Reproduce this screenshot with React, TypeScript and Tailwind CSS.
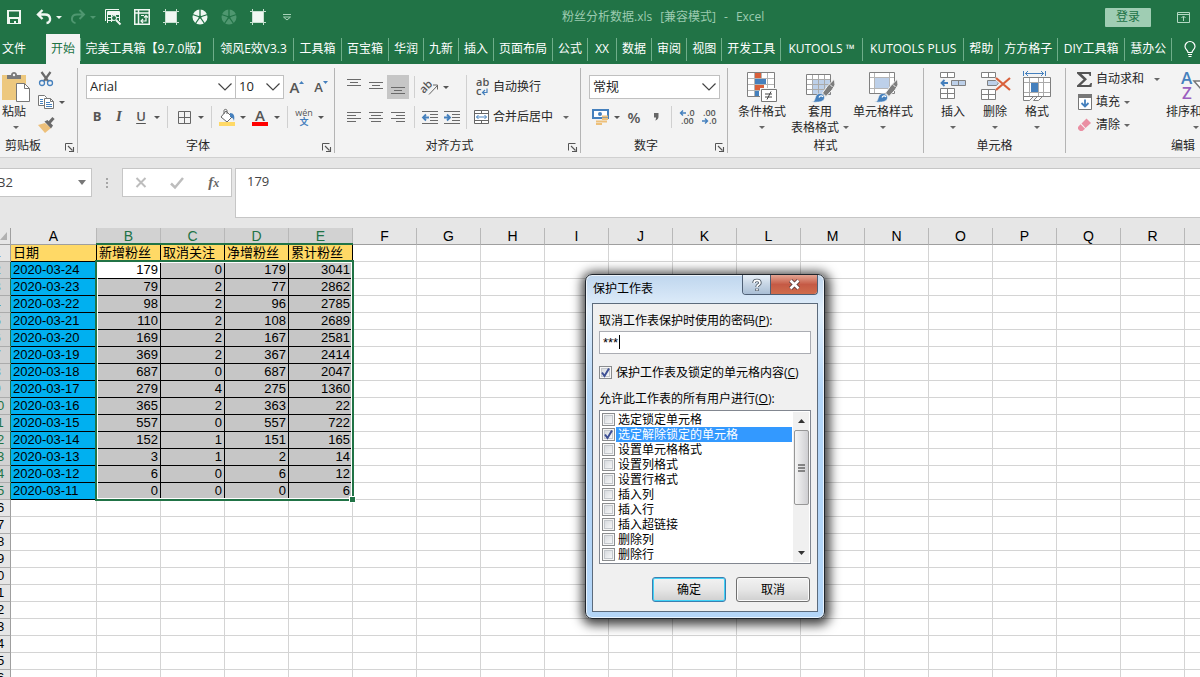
import { useState } from "react";
import type { ReactNode } from "react";

const columns = "ABCDEFGHIJKLMNOPQRS".split("");
const headings = ["日期", "新增粉丝", "取消关注", "净增粉丝", "累计粉丝"];
const records: (string | number)[][] = [
  ["2020-03-24", 179, 0, 179, 3041],
  ["2020-03-23", 79, 2, 77, 2862],
  ["2020-03-22", 98, 2, 96, 2785],
  ["2020-03-21", 110, 2, 108, 2689],
  ["2020-03-20", 169, 2, 167, 2581],
  ["2020-03-19", 369, 2, 367, 2414],
  ["2020-03-18", 687, 0, 687, 2047],
  ["2020-03-17", 279, 4, 275, 1360],
  ["2020-03-16", 365, 2, 363, 22],
  ["2020-03-15", 557, 0, 557, 722],
  ["2020-03-14", 152, 1, 151, 165],
  ["2020-03-13", 3, 1, 2, 14],
  ["2020-03-12", 6, 0, 6, 12],
  ["2020-03-11", 0, 0, 0, 6],
];
const rowCount = 26;

const tabs: { name: string; width?: string }[] = [
  { name: "完美工具箱【9.7.0版】", width: "w-[133px]" },
  { name: "领风E效V3.3", width: "w-[80px]" },
  { name: "工具箱", width: "w-12" },
  { name: "百宝箱" },
  { name: "华润" },
  { name: "九新" },
  { name: "插入" },
  { name: "页面布局" },
  { name: "公式" },
  { name: "XX", width: "w-[29px]" },
  { name: "数据" },
  { name: "审阅" },
  { name: "视图" },
  { name: "开发工具" },
  { name: "KUTOOLS ™", width: "w-[82px]" },
  { name: "KUTOOLS PLUS", width: "w-[101px]" },
  { name: "帮助" },
  { name: "方方格子" },
  { name: "DIY工具箱", width: "w-[67px]" },
  { name: "慧办公" },
];

const permissions = [
  "选定锁定单元格",
  "选定解除锁定的单元格",
  "设置单元格格式",
  "设置列格式",
  "设置行格式",
  "插入列",
  "插入行",
  "插入超链接",
  "删除列",
  "删除行",
];

function Icon({ w = 16, h = 16, children, className = "" }: { w?: number; h?: number; children: ReactNode; className?: string }) {
  return (
    <svg width={w} height={h} viewBox={`0 0 ${w} ${h}`} fill="none" className={`shrink-0 overflow-visible ${className}`} aria-hidden="true">
      {children}
    </svg>
  );
}

function Caret({ className = "" }: { className?: string }) {
  return (
    <Icon w={6} h={3} className={className}>
      <path d="M0 0h6L3 3z" fill="currentColor" />
    </Icon>
  );
}

function Tool({ label, width = "w-[22px]", active = false, children }: { label: string; width?: string; active?: boolean; children: ReactNode }) {
  return (
    <button type="button" aria-label={label} className={`flex h-6 shrink-0 items-center justify-center text-[#555] ${width} ${active ? "bg-[#c6c6c6]" : ""}`}>
      {children}
    </button>
  );
}

function Drop({ label }: { label: string }) {
  return (
    <Tool label={label} width="w-[10px]">
      <Caret />
    </Tool>
  );
}

function Rule() {
  return <span className="ml-[5px] mr-1 h-[22px] w-px shrink-0 bg-[#d0d0d0]" />;
}

function Group({ label, width, launcher = false, labelClass = "", children }: { label: string; width: string; launcher?: boolean; labelClass?: string; children: ReactNode }) {
  return (
    <section aria-label={label} className={`my-1 flex h-[85px] shrink-0 flex-col border-r border-[#b4b4b4] ${width}`}>
      <div className="h-[70px]">{children}</div>
      <div className="flex h-[15px] items-center pt-px">
        <span className={`flex-1 text-center leading-[14px] ${labelClass}`}>{label}</span>
        {launcher && (
          <button type="button" aria-label={`${label}设置`} className="flex w-4 justify-center pt-[3px] text-[#555]">
            <Icon w={9} h={9}>
              <path d="M.5 7.500V.5H7.500" stroke="currentColor" />
              <path d="M3 3l4.500 4.500M8.500 4v4.500H4" stroke="currentColor" strokeWidth="1.100" />
            </Icon>
          </button>
        )}
      </div>
    </section>
  );
}

function Combo({ label, value, width }: { label: string; value: string; width: string }) {
  return (
    <div className={`grid h-6 items-center border border-[#c0c0c0] bg-white ${width}`}>
      <select aria-label={label} defaultValue={value} className="h-full w-full appearance-none bg-transparent pl-[3px] text-[13px] outline-none [grid-area:1/1]">
        <option>{value}</option>
      </select>
      <Icon w={14} h={8} className="pointer-events-none mr-[3px] justify-self-end [grid-area:1/1]">
        <path d="M.5.5L7 7L13.500.5" stroke="#444" strokeWidth="1.200" />
      </Icon>
    </div>
  );
}

function Lines({ widths, top, align }: { widths: number[]; top: number; align: "l" | "c" | "r" }) {
  return (
    <Icon w={14} h={14}>
      {widths.map((w, i) => (
        <path key={i} d={`M${align === "l" ? 0 : align === "c" ? (14 - w) / 2 : 14 - w} ${top + i * 3 + 0.5}h${w}`} stroke="#6a6a6a" />
      ))}
    </Icon>
  );
}

function BigTool({ label, width, icon }: { label: string; width: string; icon: ReactNode }) {
  return (
    <button type="button" className={`flex shrink-0 flex-col items-center pt-1 ${width}`}>
      <span className="flex h-8 items-start">{icon}</span>
      <span className="whitespace-nowrap leading-4">{label}</span>
      <Caret className="mt-[6px] text-[#666]" />
    </button>
  );
}

function BrushOverlay() {
  return (
    <>
      <path d="M29.500 7l-7 7-5 7 3.500 3.500 6-6.500 3-5z" fill="#7d7d7d" stroke="#f3f3f3" />
      <path d="M25 12.500l2.500 2.500" stroke="#f3f3f3" />
      <path d="M6 30c5 0 3-4 6-7.500 3-2.500 8 0 7.500 3.500-.5 4-6 4.500-13.500 4z" fill="#4580bd" stroke="#f3f3f3" strokeWidth=".6" />
      <path d="M14 25.500c1-2 3-2 4-.5" stroke="#fff" strokeWidth="1.200" />
    </>
  );
}

function PasteIcon() {
  return (
    <Icon w={29} h={31}>
      <path d="M0 3h24v25H0z" fill="#edc87e" />
      <path d="M5 3h4c0-4 6-4 6 0h4v4H5z" fill="#7a7a7a" />
      <circle cx="12" cy="3" r="1.200" fill="#f3f3f3" />
      <path d="M14.500 11.500h8l5 5v13h-13z" fill="#fff" stroke="#777" />
      <path d="M22.500 11.500v5h5" stroke="#777" />
    </Icon>
  );
}

function CutIcon() {
  return (
    <Icon>
      <path d="M3.500 1l6.500 9M12.500 1L6 10" stroke="#6a6a6a" strokeWidth="2.200" />
      <circle cx="4" cy="12" r="2.500" stroke="#4580bd" strokeWidth="1.300" />
      <circle cx="12" cy="12" r="2.500" stroke="#4580bd" strokeWidth="1.300" />
    </Icon>
  );
}

function CopyIcon() {
  return (
    <Icon>
      <path d="M.5 1.500h6l2 2v8h-8z" fill="#fff" stroke="#777" />
      <path d="M2 5.500h3M2 7.500h3M2 9.500h3" stroke="#4580bd" />
      <path d="M6.500 4.500h6l3 3v7h-9z" fill="#fff" stroke="#777" />
      <path d="M12.500 4.500v3h3" stroke="#777" />
      <path d="M8 8.500h4M8 10.500h6M8 12.500h6" stroke="#4580bd" />
    </Icon>
  );
}

function PainterIcon() {
  return (
    <Icon>
      <path d="M0 8l7-2 6 5-6 5z" fill="#edc07a" />
      <path d="M6.500 4.500l3-1.500 5.500 5.500-2 3z" fill="#6a6a6a" />
      <path d="M11 6l4.500-5" stroke="#6a6a6a" strokeWidth="3" />
    </Icon>
  );
}

function ConditionalIcon() {
  return (
    <Icon w={30} h={31}>
      <path d="M.5.500h27v24H.5z" fill="#fff" />
      <path d="M8 1h6v5H8zM8 13h9v5H8z" fill="#d9603b" />
      <path d="M8 7h11v5H8zM8 19h4v5H8z" fill="#4580bd" />
      <path d="M7.500 1v23M14.500 1v5M20.500 1v23M1 6.500h26M1 12.500h26M1 18.500h26" stroke="#b5b5b5" />
      <path d="M.5.500h27v24H.5z" stroke="#808080" />
      <path d="M13 16h18v15H13z" fill="#f3f3f3" />
      <path d="M14.500 17.500h15v12h-15z" fill="#fff" stroke="#777" />
      <path d="M18 22h7M18 25h7M24 19.500l-4 8" stroke="#444" />
    </Icon>
  );
}

function TableFormatIcon() {
  return (
    <Icon w={31} h={32}>
      <path d="M1.500 2.500h24v20h-24z" fill="#fff" />
      <path d="M8 8h18v15H8z" fill="#bdd0e9" />
      <path d="M7.500 2.500v20M13.500 2.500v20M19.500 2.500v20M1.500 7.500h24M1.500 12.500h24M1.500 17.500h24" stroke="#aaa" />
      <path d="M1.500 2.500h24v20h-24z" stroke="#808080" />
      <BrushOverlay />
    </Icon>
  );
}

function CellStyleIcon() {
  return (
    <Icon w={31} h={32}>
      <path d="M1.500.500h25v21h-25z" fill="#fff" stroke="#808080" />
      <path d="M6.500 1v20M21.500 1v20M2 5.500h24M2 16.500h24" stroke="#b5b5b5" />
      <path d="M7 6h14v10H7z" fill="#bdd0e9" />
      <BrushOverlay />
    </Icon>
  );
}

function InsertIcon() {
  return (
    <Icon w={27} h={28}>
      <path d="M.5.500h14v5H.5zM7.500.5v5M.5 16.500h14v10H.5zM7.500 16.500v10M.5 21.500h14" fill="#fff" stroke="#808080" />
      <path d="M11.500 8.500h14v5h-14zM18.500 8.500v5" fill="#bdd0e9" stroke="#808080" />
      <path d="M8 11H2M4.500 8L1.500 11l3 3" stroke="#4580bd" strokeWidth="1.800" />
    </Icon>
  );
}

function DeleteIcon() {
  return (
    <Icon w={28} h={28}>
      <path d="M.5.500h14v5H.5zM7.500.5v5M.5 17.500h14v10H.5zM7.500 17.500v10M.5 22.500h14" fill="#fff" stroke="#808080" />
      <path d="M6.500 8.500h9l2 2.500-2 2.500h-9z" fill="#bdd0e9" stroke="#808080" />
      <path d="M15 6l14 12M29 6L15 18" stroke="#f3f3f3" strokeWidth="4" />
      <path d="M15 6l14 12M29 6L15 18" stroke="#d9603b" strokeWidth="2.200" />
    </Icon>
  );
}

function FormatIcon() {
  return (
    <Icon w={28} h={31}>
      <path d="M.5-1v5M22.500-1v5M2 1.500h19M5-1L2.500 1.500 5 4M18-1l2.500 2.500L18 4" stroke="#4580bd" />
      <path d="M.5 5.500h27v19h-8l-4 4h-5l4-4h-4l-4 4h-6z" fill="#fff" stroke="#808080" />
      <path d="M6.500 6v18M15.500 6v18M20.500 6v18M1 10.500h26M1 20.500h26" stroke="#aaa" />
      <path d="M.5 24.500h27M6.500 28.500l4-4" stroke="#808080" />
      <path d="M8 11h7v9H8z" fill="#4580bd" />
    </Icon>
  );
}

function QuickAccess() {
  const corners = (
    <Icon>
      <path d="M3 3h10v10H3z" fill="#f0f7f2" />
      <path d="M2.500 0v3M0 2.500h3M13.500 0v3M13 2.500h3M2.500 13v3M0 13.500h3M13.500 13v3M13 13.500h3M2.500 3v10M13.500 3v10M3 2.500h10M3 13.500h10" stroke="#c8e0d1" />
    </Icon>
  );
  const aperture = (
    <Icon>
      <circle cx="8" cy="8" r="7.500" fill="currentColor" />
      <path d="M8 8V0M8 8L.5 5.500M8 8l7.500-2.500M8 8l-4.500 6.500M8 8l4.500 6.500" stroke="#217346" strokeWidth="1.300" />
      <circle cx="8" cy="8" r="1.500" fill="#217346" />
    </Icon>
  );
  const item = "flex h-6 shrink-0 items-center justify-center text-[#f0f7f2]";
  return (
    <div className="flex w-[562px] shrink-0 items-center">
      <button type="button" aria-label="保存" className={`${item} w-7`}>
        <Icon w={14} h={14}>
          <path d="M0 0h14v14H0zM2 1.500v5.500h10V1.500zM3 9v4h4v-2h2v2h2V9z" fill="currentColor" fillRule="evenodd" />
        </Icon>
      </button>
      <button type="button" aria-label="撤销" className={`${item} w-[37px] gap-1 pl-1`}>
        <Icon>
          <path d="M2 5.500h7c6.500 0 6.500 8 1.500 8.500M6.500 1L2 5.500 6.500 10" stroke="currentColor" strokeWidth="2.400" />
        </Icon>
        <Caret />
      </button>
      <button type="button" aria-label="重做" className={`${item} w-[35px] gap-1 !text-[#4f9770]`}>
        <Icon>
          <path d="M14 5.500H7c-6.500 0-6.500 8-1.500 8.500M9.500 1L14 5.500 9.500 10" stroke="currentColor" strokeWidth="2" />
        </Icon>
        <Caret />
      </button>
      <button type="button" aria-label="查看表格" className={`${item} w-[26px]`}>
        <Icon>
          <path d="M.5 12V.5H14M2.500 14V2.500h12V12M2.500 5.500h12M2.500 8.500h12M6.500 5v8M10.500 5v6M2.500 11.500h6" stroke="currentColor" />
          <path d="M3 3h11v2H3z" fill="currentColor" />
          <circle cx="9" cy="9" r="2.500" fill="#217346" stroke="currentColor" />
          <path d="M11 11l4.500 4.500" stroke="currentColor" strokeWidth="2" />
        </Icon>
      </button>
      <button type="button" aria-label="数据透视表" className={`${item} w-8`}>
        <Icon>
          <path d="M.75.75h14.500v14.500H.75zM1 4h14M4.500 1v14" stroke="currentColor" strokeWidth="1.500" />
          <path d="M7 12h5V7M9 10l-2 2 2 2M10 8.500l2-2 2 2M7 6.500h3" stroke="currentColor" strokeWidth="1.200" />
        </Icon>
      </button>
      <button type="button" aria-label="选择区域" className={`${item} w-[26px]`}>{corners}</button>
      <button type="button" aria-label="宏" className={`${item} w-8`}>{aperture}</button>
      <button type="button" aria-label="停用宏" className={`${item} w-[26px] !text-[#4f9770]`}>{aperture}</button>
      <button type="button" aria-label="调整区域" className={`${item} w-8`}>{corners}</button>
      <button type="button" aria-label="自定义快速访问工具栏" className={`${item} w-[26px]`}>
        <Icon w={8} h={7}>
          <path d="M0 .5h8M.5 3L4 6l3.500-3z" stroke="#a9d3ba" />
        </Icon>
      </button>
    </div>
  );
}

function Ribbon() {
  return (
    <div className="flex h-[94px] shrink-0 overflow-hidden border-b border-[#d0d0d0] bg-[#f3f3f3] text-[#262626]">
      <Group label="剪贴板" width="w-[78px]" launcher labelClass="pr-[15px]">
        <div className="flex">
          <button type="button" className="flex w-9 flex-col items-start pl-[2px] pt-1">
            <PasteIcon />
            <span className="pt-px leading-4">粘贴</span>
            <Caret className="ml-[11px] mt-[6px] text-[#666]" />
          </button>
          <div className="flex flex-col pl-[2px]">
            <button type="button" aria-label="剪切" className="flex h-[22px] items-center"><CutIcon /></button>
            <button type="button" aria-label="复制" className="flex h-6 items-center gap-[5px] text-[#555]"><CopyIcon /><Caret /></button>
            <button type="button" aria-label="格式刷" className="flex h-[22px] items-center"><PainterIcon /></button>
          </div>
        </div>
      </Group>

      <Group label="字体" width="w-[257px]" launcher>
        <div className="flex flex-col gap-[6px] pl-2 pt-[7px]">
          <div className="flex">
            <Combo label="字体名称" value="Arial" width="w-[150px]" />
            <Combo label="字号" value="10" width="-ml-px w-[49px]" />
            <Tool label="增大字号" width="w-[26px]">
              <span className="text-[15px] font-semibold leading-none">A</span>
              <Icon w={5} h={12}><path d="M0 3h5L2.500 0z" fill="#4580bd" /></Icon>
            </Tool>
            <Tool label="减小字号" width="w-[22px]">
              <span className="text-[13px] font-semibold leading-none">A</span>
              <Icon w={5} h={12}><path d="M0 0h5L2.500 3z" fill="#4580bd" /></Icon>
            </Tool>
          </div>
          <div className="flex items-center">
            <Tool label="加粗"><span className="text-[13px] font-bold">B</span></Tool>
            <Tool label="倾斜"><span className="font-['Liberation_Serif',serif] text-[15px] font-bold italic">I</span></Tool>
            <Tool label="下划线"><span className="text-[13px] font-semibold underline underline-offset-2">U</span></Tool>
            <Drop label="下划线样式" />
            <Rule />
            <Tool label="边框" width="w-6">
              <Icon w={13} h={13}><path d="M.5.5h12v12H.5zM6.500.5v12M.5 6.500h12" stroke="#666" /></Icon>
            </Tool>
            <Drop label="边框样式" />
            <Rule />
            <Tool label="填充颜色">
              <Icon w={16} h={17}>
                <path d="M7 2l6 6-5 5-6-5z" fill="#fff" stroke="#666" />
                <path d="M5 5V1.500C5 0 8 0 8 1.500V5" stroke="#666" />
                <path d="M11 4c4 0 5 3 4 8-1-3-2-4-4-4z" fill="#4580bd" />
                <path d="M0 13h16v4H0z" fill="#ffd966" />
              </Icon>
            </Tool>
            <Drop label="填充颜色选项" />
            <Tool label="字体颜色" width="w-6">
              <span className="flex w-4 flex-col items-center border-b-4 border-[#f00] text-[15px] font-semibold leading-[13px]">A</span>
            </Tool>
            <Drop label="字体颜色选项" />
            <Rule />
            <Tool label="拼音" width="w-6">
              <span className="flex flex-col items-center">
                <span className="text-[9px] leading-[9px]">wén</span>
                <span className="text-[9px] font-bold leading-[9px] text-[#4580bd]">文</span>
              </span>
            </Tool>
            <Drop label="拼音选项" />
          </div>
        </div>
      </Group>

      <Group label="对齐方式" width="w-[246px]" launcher>
        <div className="flex pt-[7px]">
          <div className="flex flex-col gap-[6px] pl-2">
            <div className="flex items-center">
              <Tool label="顶端对齐"><Lines widths={[14, 8, 14]} top={-1} align="c" /></Tool>
              <Tool label="垂直居中"><Lines widths={[14, 8, 14]} top={2} align="c" /></Tool>
              <Tool label="底端对齐" active><Lines widths={[14, 8, 14]} top={7} align="c" /></Tool>
              <Rule />
              <Tool label="方向">
                <Icon>
                  <text x="-2" y="10" fontSize="11" fontWeight="600" fill="#555" transform="rotate(-45 6 8)">ab</text>
                  <path d="M7 15.500l8.500-9M11 6h4.500v4.500" stroke="#666" />
                </Icon>
              </Tool>
              <Drop label="方向选项" />
            </div>
            <div className="flex items-center">
              <Tool label="左对齐"><Lines widths={[14, 9, 14, 9]} top={2} align="l" /></Tool>
              <Tool label="居中"><Lines widths={[14, 10, 14, 10]} top={2} align="c" /></Tool>
              <Tool label="右对齐"><Lines widths={[14, 9, 14, 9]} top={2} align="r" /></Tool>
              <Rule />
              <Tool label="减少缩进量">
                <Icon>
                  <path d="M0 2.500h16M8 5.500h8M8 8.500h8M8 11.500h8M0 14.500h16" stroke="#6a6a6a" />
                  <path d="M7 8.500H1M4 5.500l-3 3 3 3" stroke="#4580bd" strokeWidth="1.800" />
                </Icon>
              </Tool>
              <Tool label="增加缩进量">
                <Icon>
                  <path d="M0 2.500h16M8 5.500h8M8 8.500h8M8 11.500h8M0 14.500h16" stroke="#6a6a6a" />
                  <path d="M0 8.500h6M3 5.500l3 3-3 3" stroke="#4580bd" strokeWidth="1.800" />
                </Icon>
              </Tool>
            </div>
          </div>
          <span className="ml-[3px] mr-[7px] w-px bg-[#d0d0d0]" />
          <div className="flex flex-col gap-[6px]">
            <button type="button" className="flex h-6 items-center gap-1">
              <Icon w={15} h={16}>
                <text x="2" y="7" fontSize="11" fontWeight="600" fill="#555">ab</text>
                <text x="2" y="16" fontSize="11" fontWeight="600" fill="#555">c</text>
                <path d="M13 9.500v4H9M11 11l-2.500 2.500L11 16" stroke="#4580bd" strokeWidth="1.200" />
              </Icon>
              自动换行
            </button>
            <button type="button" className="flex h-6 items-center gap-1">
              <Icon w={15} h={16}>
                <path d="M.5 1.500h14v13H.5zM.5 4.500h14M.5 11.500h14M7.500 1.500v3M7.500 11.500v3" fill="#fff" stroke="#666" />
                <path d="M2.500 8h10M4.500 6l-2 2 2 2M10.500 6l2 2-2 2" stroke="#4580bd" />
              </Icon>
              合并后居中
              <Caret className="ml-[6px] text-[#666]" />
            </button>
          </div>
        </div>
      </Group>

      <Group label="数字" width="w-[147px]" launcher>
        <div className="flex flex-col gap-[6px] pl-2 pt-[7px]">
          <Combo label="数字格式" value="常规" width="w-[131px]" />
          <div className="flex items-center">
            <Tool label="会计数字格式" width="w-[23px]">
              <Icon w={17} h={16}>
                <path d="M1 1h15v8H1z" fill="#fff" stroke="#4580bd" strokeWidth="2" />
                <circle cx="8" cy="5" r="2" fill="#4580bd" />
                <path d="M10 7.500h6M10 10h6M4 12.500h6M4 15h6M10 12.500h5" stroke="#edc07a" strokeWidth="2" />
              </Icon>
            </Tool>
            <Drop label="货币选项" />
            <Tool label="百分比样式" width="w-6"><span className="text-[15px] font-semibold">%</span></Tool>
            <Tool label="千位分隔样式" width="w-5">
              <Icon w={6} h={8}><path d="M1 0h4.500v3.500c0 2-1 3.500-3.500 4 1-1 1-2 1-3H1z" fill="#666" /></Icon>
            </Tool>
            <Rule />
            <Tool label="增加小数位数">
              <Icon>
                <text x="8" y="7" fontSize="9" fontWeight="600" fill="#555">.0</text>
                <text x="2" y="15" fontSize="9" fontWeight="600" fill="#555">.00</text>
                <path d="M7 4H1.500M4 1.500L1.500 4 4 6.500" stroke="#4580bd" strokeWidth="1.400" />
              </Icon>
            </Tool>
            <Tool label="减少小数位数">
              <Icon>
                <text x="2" y="7" fontSize="9" fontWeight="600" fill="#555">.00</text>
                <text x="8" y="15" fontSize="9" fontWeight="600" fill="#555">.0</text>
                <path d="M1 12h5.500M4 9.500L6.500 12 4 14.500" stroke="#4580bd" strokeWidth="1.400" />
              </Icon>
            </Tool>
          </div>
        </div>
      </Group>

      <Group label="样式" width="w-[196px]">
        <div className="flex pl-[3px]">
          <BigTool label="条件格式" width="w-[62px]" icon={<ConditionalIcon />} />
          <button type="button" className="flex w-[54px] shrink-0 flex-col items-center pt-1">
            <span className="flex h-8 items-start"><TableFormatIcon /></span>
            <span className="leading-4">套用</span>
            <span className="flex items-center gap-1 whitespace-nowrap leading-[15px]">表格格式<Caret className="text-[#666]" /></span>
          </button>
          <BigTool label="单元格样式" width="w-[72px]" icon={<CellStyleIcon />} />
        </div>
      </Group>

      <Group label="单元格" width="w-[142px]">
        <div className="flex pl-2">
          <BigTool label="插入" width="w-[42px]" icon={<InsertIcon />} />
          <BigTool label="删除" width="w-[42px]" icon={<DeleteIcon />} />
          <BigTool label="格式" width="w-[42px]" icon={<FormatIcon />} />
        </div>
      </Group>

      <Group label="编辑" width="w-[235px]">
        <div className="flex pl-[11px]">
          <div className="flex w-[88px] flex-col">
            <button type="button" className="flex h-[22px] items-center gap-1">
              <Icon w={15} h={15}>
                <path d="M0 0h14v4h-1.500c0-1.500-.5-2-2-2H4.500L10 7.200 4 13h7c1.500 0 2-.5 2.500-2H15l-.5 4H0v-1.500l6.500-6L0 1.500z" fill="#555" />
              </Icon>
              自动求和
              <Caret className="ml-[6px] text-[#666]" />
            </button>
            <button type="button" className="flex h-6 items-center gap-1">
              <Icon w={15} h={16}>
                <path d="M1.500.500h13v15h-13z" fill="#fff" stroke="#777" />
                <path d="M1 0h14v4H1z" fill="#777" />
                <path d="M8 5.500v7M4.500 9L8 12.500 11.500 9" stroke="#4580bd" strokeWidth="1.800" />
              </Icon>
              填充
              <Caret className="text-[#666]" />
            </button>
            <button type="button" className="flex h-[22px] items-center gap-1">
              <Icon w={15} h={15}>
                <path d="M9.500.5L14 5 8.500 10 4.500 5.500z" fill="#ea8fa3" />
                <path d="M3.500 6.300l4.500 4.500-2.500 2.200H3L1 11V9z" fill="#ea8fa3" />
              </Icon>
              清除
              <Caret className="text-[#666]" />
            </button>
          </div>
          <BigTool
            label="排序和筛选"
            width="w-[62px]"
            icon={
              <Icon w={31} h={30}>
                <text x="0" y="12" fontSize="17" fontWeight="600" fill="#4580bd">A</text>
                <text x="1" y="27" fontSize="17" fontWeight="600" fill="#9b5fc0">Z</text>
                <path d="M13 9h17l-7 8v7l-3-2v-5z" fill="#fff" stroke="#777" strokeWidth="1.500" />
              </Icon>
            }
          />
        </div>
      </Group>
    </div>
  );
}

function FormulaBar() {
  return (
    <div className="flex h-[70px] shrink-0 items-start bg-[#e6e6e6] pt-[10px]">
      <div className="-ml-3 flex h-[29px] w-[104px] shrink-0 items-center border border-[#c6c6c6] bg-white pr-[5px]">
        <input aria-label="名称框" defaultValue="B2" className="w-full min-w-0 bg-transparent pl-2 text-[13px] text-[#444] outline-none" />
        <Icon w={8} h={5}><path d="M0 0h8L4 5z" fill="#777" /></Icon>
      </div>
      <span className="flex h-[29px] w-[30px] shrink-0 items-center justify-center">
        <Icon w={2} h={10}><path d="M0 0h2v2H0zM0 4h2v2H0zM0 8h2v2H0z" fill="#a6a6a6" /></Icon>
      </span>
      <div className="mr-[3px] flex h-[29px] w-[110px] shrink-0 items-center justify-around border border-[#c6c6c6] bg-white">
        <button type="button" aria-label="取消输入">
          <Icon w={12} h={11}><path d="M1.500 1l9 9M10.500 1l-9 9" stroke="#bdbdbd" strokeWidth="2" /></Icon>
        </button>
        <button type="button" aria-label="确认输入">
          <Icon w={14} h={12}><path d="M1 6.500l4 4L13 1" stroke="#bdbdbd" strokeWidth="2.500" /></Icon>
        </button>
        <button type="button" aria-label="插入函数" className="font-['Liberation_Serif',serif] text-[15px] font-bold italic leading-none text-[#666]">
          f<span className="text-[12px]">x</span>
        </button>
      </div>
      <textarea aria-label="编辑栏" defaultValue="179" className="h-[50px] min-w-0 flex-1 resize-none border border-r-0 border-[#c6c6c6] bg-white px-[11px] py-1 text-[13px] leading-[17px] text-[#444] outline-none" />
    </div>
  );
}

function cellStyle(row: number, col: number) {
  if (row > 15 || col > 4) return "border-[#d4d4d4]";
  if (row === 1) return "border-black bg-[#ffd966]";
  if (col === 0) return "border-black bg-[#00b0f0]";
  if (row === 2 && col === 1) return "border-black bg-white text-right";
  return "border-black bg-[#c6c6c6] text-right";
}

function Sheet() {
  return (
    <div className="relative min-h-0 flex-1 overflow-hidden bg-white">
      <table className="w-[1249px] table-fixed border-separate border-spacing-0 font-['Liberation_Sans','Noto_Sans_CJK_SC',sans-serif] text-[13px] leading-4 text-black">
        <colgroup>
          <col className="w-[11px]" />
          {columns.map((c) => (
            <col key={c} className={c === "A" ? "w-[86px]" : "w-[64px]"} />
          ))}
        </colgroup>
        <thead>
          <tr className="h-[17px] bg-[#e6e6e6] text-[14px]">
            <th aria-label="全选" className="border-b border-r border-[#9f9f9f] p-0">
              <Icon w={8} h={9}><path d="M7 0v8H0z" fill="#b1b1b1" /></Icon>
            </th>
            {columns.map((c, i) => (
              <th key={c} className={`border-b border-r border-b-[#9f9f9f] border-r-[#b8b8b8] p-0 font-normal ${i > 0 && i < 5 ? "bg-[#d2d2d2] text-[#217346]" : ""}`}>
                {c}
              </th>
            ))}
          </tr>
        </thead>
        <tbody>
          {Array.from({ length: rowCount }, (_, i) => i + 1).map((row) => {
            const picked = row > 1 && row < 16;
            const values = row === 1 ? headings : records[row - 2] ?? [];
            return (
              <tr key={row} className="h-[17px]">
                <th className={`overflow-hidden border-b border-r border-b-[#ababab] p-0 font-normal ${picked ? "border-r-[#217346] bg-[#d2d2d2] text-[#217346]" : "border-r-[#9f9f9f] bg-[#e6e6e6]"}`}>
                  <div className="flex justify-end">
                    <span className="w-[26px] shrink-0 text-center">{row}</span>
                  </div>
                </th>
                {columns.map((c, col) => (
                  <td key={c} className={`whitespace-nowrap border-b border-r py-0 pl-[2px] pr-[2px] ${cellStyle(row, col)}`}>
                    {values[col]}
                  </td>
                ))}
              </tr>
            );
          })}
        </tbody>
      </table>
      <div className="pointer-events-none absolute left-24 top-[15px] h-[2px] w-[257px] bg-[#217346]" />
      <div className="pointer-events-none absolute left-[95px] top-8 h-[241px] w-[259px] border-2 border-[#217346]">
        <div className="h-full border border-white" />
        <span className="absolute -bottom-1 -right-1 h-[7px] w-[7px] border border-white bg-[#217346]" />
      </div>
    </div>
  );
}

function TickBox({ id, checked, onChange }: { id: string; checked: boolean; onChange: () => void }) {
  return (
    <span className="grid h-[13px] w-[13px] shrink-0 place-items-center">
      <input
        id={id}
        type="checkbox"
        checked={checked}
        onChange={onChange}
        className="h-[13px] w-[13px] appearance-none border border-[#8a8c8e] bg-linear-to-br from-[#cfd3d8] to-white shadow-[inset_0_0_0_1px_#f6f6f6,inset_0_0_0_2px_#c3c7cc] [grid-area:1/1]"
      />
      {checked && (
        <Icon w={9} h={9} className="pointer-events-none [grid-area:1/1]">
          <path d="M1 4.500L3.500 8 8 .5" stroke="#3d4f94" strokeWidth="2" />
        </Icon>
      )}
    </span>
  );
}

function ProtectDialog() {
  const [protect, setProtect] = useState(true);
  const [allowed, setAllowed] = useState<number[]>([1]);
  const toggle = (i: number) => setAllowed((list) => (list.includes(i) ? list.filter((n) => n !== i) : [...list, i]));
  return (
    <div
      role="dialog"
      aria-labelledby="protect-title"
      className="absolute left-[585px] top-[274px] w-60 rounded-[7px] border border-[#20262d] bg-linear-to-b from-[#bfd6ee] via-[#e2effb] via-10% to-[#b4d6f8] to-35% px-[6px] pb-[6px] text-black shadow-[1px_2px_11px_4px_rgba(0,0,0,0.75),inset_0_0_0_1px_rgba(255,255,255,0.7)]"
    >
      <div className="flex h-7 items-start">
        <h2 id="protect-title" className="flex-1 pl-px pt-[6px] text-xs leading-4">保护工作表</h2>
        <div className="flex h-5 overflow-hidden rounded-b-[4px] border border-t-0 border-[#4e5f75]">
          <button type="button" aria-label="帮助" className="flex w-7 items-center justify-center border-r border-[#4e5f75] bg-linear-to-b from-[#e8f0f8] via-[#c9d7e6] via-45% to-[#a9bed5]">
            <Icon w={10} h={12}>
              <path d="M2 4c0-3.500 6-3.500 6 0 0 2-3 1.500-3 4M5 9.500v2.500" stroke="#4f5a66" strokeWidth="3.400" />
              <path d="M2 4c0-3.500 6-3.500 6 0 0 2-3 1.500-3 4M5 9.800v1.700" stroke="#fff" strokeWidth="1.600" />
            </Icon>
          </button>
          <button type="button" aria-label="关闭" className="flex w-[46px] items-center justify-center bg-linear-to-b from-[#e3a594] via-[#c55a45] via-50% to-[#cf6c4c]">
            <Icon w={13} h={11}>
              <path d="M2.500 1.500l8 8M10.500 1.500l-8 8" stroke="#5a3a3a" strokeWidth="4.400" />
              <path d="M2.500 1.500l8 8M10.500 1.500l-8 8" stroke="#fff" strokeWidth="2.600" />
            </Icon>
          </button>
        </div>
      </div>

      <form onSubmit={(e) => e.preventDefault()} className="border border-[#5c6b7c] bg-[#f0f0f0] px-[6px] pb-[9px] pt-2 text-xs leading-4">
        <label htmlFor="password" className="block h-[19px] leading-[17px]">取消工作表保护时使用的密码(<u>P</u>):</label>
        <div className="relative">
          <input id="password" type="text" defaultValue="***" className="block h-[23px] w-full border border-[#abadb3] bg-white px-[3px] font-['Liberation_Sans',sans-serif] text-[13px] outline-none" />
          <span className="absolute left-5 top-1 h-[14px] w-px bg-black" />
        </div>
        <div className="mt-[10px] flex items-center gap-1">
          <TickBox id="protect" checked={protect} onChange={() => setProtect(!protect)} />
          <label htmlFor="protect" className="pt-px leading-[15px]">保护工作表及锁定的单元格内容(<u>C</u>)</label>
        </div>
        <p id="allow-label" className="mt-[10px] h-5 leading-[18px]">允许此工作表的所有用户进行(<u>O</u>):</p>
        <div className="flex border border-[#828790] bg-white p-px">
          <ul aria-labelledby="allow-label" className="min-w-0 flex-1">
            {permissions.map((name, i) => (
              <li key={name} className="flex h-[15px] items-center pl-px">
                <TickBox id={`permission-${i}`} checked={allowed.includes(i)} onChange={() => toggle(i)} />
                <label htmlFor={`permission-${i}`} className={`ml-px h-[15px] flex-1 pl-[2px] leading-[15px] ${i === 1 ? "bg-[#3399ff] text-white" : ""}`}>
                  {name}
                </label>
              </li>
            ))}
          </ul>
          <div className="ml-px flex w-4 flex-col items-center bg-[#f0f0f0] text-[#333]">
            <span className="flex h-[18px] items-center"><Icon w={7} h={4}><path d="M0 4h7L3.500 0z" fill="currentColor" /></Icon></span>
            <span className="flex h-[75px] w-[15px] items-center justify-center rounded-[2px] border border-[#979797] bg-linear-to-r from-[#f5f5f5] to-[#cfcfd2]">
              <Icon w={7} h={8}><path d="M0 1h7M0 4h7M0 7h7" stroke="#666" strokeWidth="1.500" /></Icon>
            </span>
            <span className="mt-auto flex h-[18px] items-center"><Icon w={7} h={4}><path d="M0 0h7L3.500 4z" fill="currentColor" /></Icon></span>
          </div>
        </div>
        <div className="mt-[13px] flex justify-end gap-[10px] pr-px">
          <button type="submit" className="h-[25px] w-[74px] rounded-[3px] border border-[#3c7fb1] bg-linear-to-b from-[#f2f2f2] via-[#e6e6e6] via-50% to-[#cfcfcf] shadow-[inset_0_0_0_1px_#41d3f7]">确定</button>
          <button type="button" className="h-[25px] w-[74px] rounded-[3px] border border-[#707070] bg-linear-to-b from-[#f2f2f2] via-[#e6e6e6] via-50% to-[#cfcfcf] shadow-[inset_0_0_0_1px_#fafafa]">取消</button>
        </div>
      </form>
    </div>
  );
}

export default function App() {
  return (
    <div className="relative flex h-screen flex-col overflow-hidden bg-[#e6e6e6] font-['Open_Sans','Noto_Sans_CJK_SC',sans-serif] text-xs">
      <header className="shrink-0 bg-[#217346]">
        <div className="flex h-[34px] items-center">
          <QuickAccess />
          <h1 className="flex gap-2 text-[#9ccbb0]">
            <span>粉丝分析数据.xls</span>
            <span>[兼容模式]</span>
            <span>-</span>
            <span>Excel</span>
          </h1>
          <div className="ml-auto flex items-center gap-[26px] pr-[10px]">
            <button type="button" className="h-[19px] w-[46px] rounded-[1px] bg-[#9fcdb3] leading-[18px] text-[#217346]">登录</button>
            <button type="button" aria-label="功能区显示选项">
              <Icon w={13} h={11}>
                <path d="M.5.5h12v10H.5zM.5 2.500h12M6.500 9V4.500M4.500 6l2-2 2 2" stroke="#b5d9c4" />
              </Icon>
            </button>
          </div>
        </div>
        <nav aria-label="功能区选项卡" className="flex h-[30px] items-center overflow-hidden whitespace-nowrap text-white">
          <button type="button" className="w-[46px] shrink-0 pl-[2px] text-left">文件</button>
          <button type="button" className="h-full w-[34px] shrink-0 bg-[#f3f3f3] text-[#217346]">开始</button>
          <span className="h-[23px] w-px shrink-0 bg-[#6fae8a]" />
          {tabs.map((tab) => (
            <button key={tab.name} type="button" className={`flex h-[23px] shrink-0 items-center justify-center border-r border-[#6fae8a] ${tab.width ?? "px-[5px]"}`}>
              {tab.name}
            </button>
          ))}
          <button type="button" aria-label="操作说明搜索" className="shrink-0 pl-3">
            <Icon w={12} h={16}>
              <path d="M4 11.500C4 9 1 8.500 1 5.500a5 5 0 0110 0c0 3-3 3.500-3 6zM4 13.500h4M4.500 15.500h3" stroke="#fff" strokeWidth="1.200" />
            </Icon>
          </button>
        </nav>
      </header>
      <Ribbon />
      <FormulaBar />
      <Sheet />
      <ProtectDialog />
    </div>
  );
}
